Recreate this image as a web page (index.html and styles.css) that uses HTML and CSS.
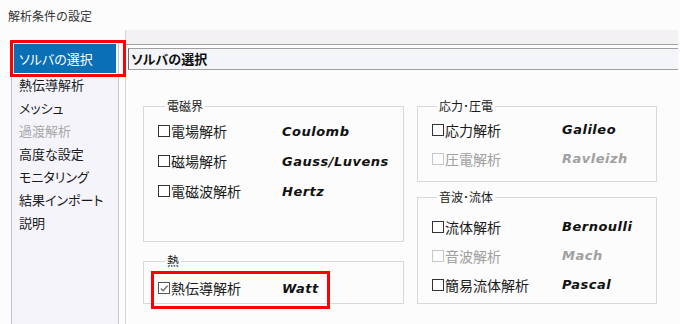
FILE: index.html
```html
<!DOCTYPE html>
<html lang="ja">
<head>
<meta charset="utf-8">
<link rel="stylesheet" href="styles.css">
</head>
<body>
<div class="title">解析条件の設定</div>
<div class="main">
  <nav class="sidebar">
    <div class="item selected">ソルバの選択<span class="hl hl-side"></span></div>
    <div class="item">熱伝導解析</div>
    <div class="item">メッシュ</div>
    <div class="item disabled">過渡解析</div>
    <div class="item">高度な設定</div>
    <div class="item">モニタリング</div>
    <div class="item">結果インポート</div>
    <div class="item">説明</div>
  </nav>
  <section class="panel">
    <div class="toolbar"></div>
    <div class="header">ソルバの選択</div>
    <div class="groups">
      <div class="col col-l">
        <fieldset class="grp g-em">
          <legend>電磁界</legend>
          <div class="row"><span class="cb"></span><span class="lbl">電場解析</span><span class="nm">Coulomb</span></div>
          <div class="row"><span class="cb"></span><span class="lbl">磁場解析</span><span class="nm">Gauss/Luvens</span></div>
          <div class="row"><span class="cb"></span><span class="lbl">電磁波解析</span><span class="nm">Hertz</span></div>
        </fieldset>
        <fieldset class="grp g-heat">
          <legend>熱</legend>
          <div class="row"><span class="cb checked"><svg viewBox="0 0 11 11" width="11" height="11"><path d="M2 5.5 L4.5 8 L9.5 2.5" fill="none" stroke="#6a6a6a" stroke-width="1.4"/></svg></span><span class="lbl">熱伝導解析</span><span class="nm">Watt</span><span class="hl hl-heat"></span></div>
        </fieldset>
      </div>
      <div class="col col-r">
        <fieldset class="grp g-stress">
          <legend>応力･圧電</legend>
          <div class="row"><span class="cb"></span><span class="lbl">応力解析</span><span class="nm">Galileo</span></div>
          <div class="row off"><span class="cb"></span><span class="lbl">圧電解析</span><span class="nm">Ravleizh</span></div>
        </fieldset>
        <fieldset class="grp g-fluid">
          <legend>音波･流体</legend>
          <div class="row"><span class="cb"></span><span class="lbl">流体解析</span><span class="nm">Bernoulli</span></div>
          <div class="row off"><span class="cb"></span><span class="lbl">音波解析</span><span class="nm">Mach</span></div>
          <div class="row"><span class="cb"></span><span class="lbl">簡易流体解析</span><span class="nm">Pascal</span></div>
        </fieldset>
      </div>
    </div>
  </section>
</div>
</body>
</html>
```

FILE: styles.css
```css
* { box-sizing: border-box; }
html, body { margin: 0; padding: 0; }
body {
  width: 680px;
  height: 324px;
  overflow: hidden;
  background: #fbfcfb;
  color: #1a1a1a;
  font-family: "Noto Sans CJK JP", "Noto Sans", sans-serif;
}
.title {
  height: 30px;
  padding: 8px 0 0 8px;
  font-size: 12px;
  line-height: 16px;
  color: #333;
}
.main {
  display: flex;
  height: 294px;
}
.sidebar {
  margin: 10px 0 0 11px;
  width: 108px;
  background: #f4f4fa;
  border-left: 1px solid #c4c4cc;
  border-right: 1px solid #c8c8d0;
  padding-top: 4px;
  font-feature-settings: "palt";
}
.item {
  position: relative;
  margin: 0 2px;
  padding-left: 5px;
  height: 23px;
  font-size: 13px;
  line-height: 23px;
  white-space: nowrap;
}
.item.selected {
  height: 29px;
  line-height: 29px;
  background: #0a6fb5;
  color: #fff;
}
.item.disabled { color: #a8a8a8; }
.hl {
  position: absolute;
  border: 3px solid #f00;
  pointer-events: none;
}
.hl-side {
  left: -4px;
  top: -4px;
  width: 116px;
  height: 37px;
}
.panel {
  flex: 1;
  margin: 0 2px 0 6px;
  border-left: 1px solid #d4d4d8;
}
.toolbar {
  height: 15px;
  background: #f3f1f4;
  border-bottom: 1px solid #a0a0a0;
}
.header {
  margin: 3px 0 0 2px;
  height: 22px;
  background: #f4f5f9;
  border-top: 1px solid #a0a0a0;
  border-bottom: 1px solid #a0a0a0;
  border-left: 1px solid #707070;
  padding-left: 2px;
  font-size: 13px;
  font-weight: bold;
  line-height: 20px;
  color: #111;
  font-feature-settings: "palt";
}
.groups {
  display: flex;
  gap: 13px;
  padding: 29px 0 0 17px;
}
.col {
  display: flex;
  flex-direction: column;
}
.col-l { width: 261px; gap: 12px; --lw: 124px; }
.col-r { width: 240px; gap: 8px; --lw: 130px; }
.grp {
  margin: 0;
  padding: 0 0 0 14px;
  min-width: 0;
  border: 1px solid #d9d9d9;
}
.grp legend {
  margin-left: 7px;
  padding: 0 2px;
  font-size: 12px;
  line-height: 14px;
}
.col-r .grp legend { margin-left: 5px; }
.g-em { height: 143px; padding-top: 3px; }
.g-heat { padding-top: 5px; }
.g-stress { height: 83px; padding-top: 2px; }
.g-fluid { padding-top: 8px; padding-bottom: 4px; }
.row {
  position: relative;
  display: flex;
  align-items: center;
  height: 30px;
}
.col-r .row { height: 29px; }
.cb {
  flex: none;
  width: 12px;
  height: 12px;
  border: 1px solid #333;
  background: #fff;
  display: flex;
  align-items: center;
  justify-content: center;
}
.cb.checked { border-color: #555; }
.cb svg { display: block; }
.lbl {
  width: calc(var(--lw) - 12px);
  padding-left: 1px;
  font-size: 14px;
  white-space: nowrap;
}
.nm {
  font-family: "DejaVu Sans", sans-serif;
  font-weight: bold;
  font-style: italic;
  font-size: 13px;
  letter-spacing: 0.5px;
  white-space: nowrap;
  color: #111;
}
.row.off { color: #a0a0a0; }
.row.off .nm { color: #a0a0a0; }
.row.off .cb { border-color: #c8c8c8; background: transparent; }
.hl-heat {
  left: -7px;
  top: -2px;
  width: 179px;
  height: 38px;
}
```
